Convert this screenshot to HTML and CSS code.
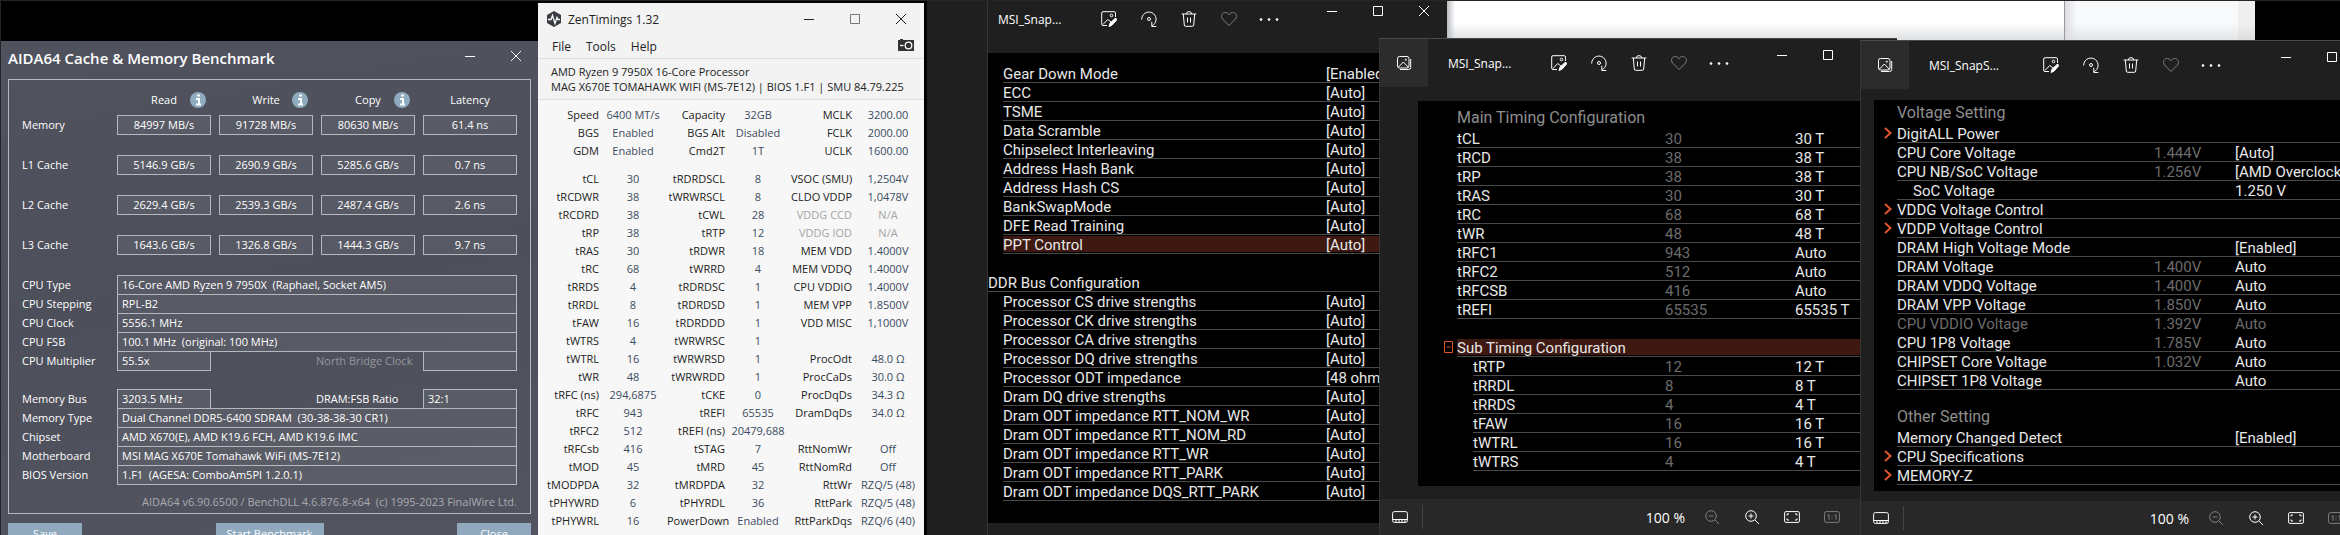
FILE: index.html
```
<!DOCTYPE html>
<html lang="en">
<head>
  <meta charset="UTF-8">
  <meta name="viewport" content="width=device-width, initial-scale=1.0">
  <title>Memory Timings</title>
  <link rel="stylesheet" href="styles.css">
</head>
<body>
  <!-- Shared icons -->
  <svg class="icon-defs" aria-hidden="true">
    <symbol id="i-min" viewBox="0 0 16 16"><path d="M3 8.500h10"/></symbol>
    <symbol id="i-max" viewBox="0 0 16 16"><path d="M3.500 3.500h9v9h-9z"/></symbol>
    <symbol id="i-close" viewBox="0 0 16 16"><path d="M3 3l10 10M13 3L3 13"/></symbol>
    <symbol id="i-gallery" viewBox="0 0 16 16"><rect x="1.500" y="1.500" width="11.500" height="11.500" rx="2"/><path d="M2.500 12l4.800-5 4.800 5M14.700 4v8.500q0 2-2.200 2H4"/><circle cx="9.800" cy="4.700" r=".6"/></symbol>
    <symbol id="i-edit" viewBox="0 0 16 16"><path d="M14.500 6V2q0-1.300-1.300-1.300H2Q.7.700.7 2v11.300q0 1.200 1.300 1.200h4M2 13.500l4.700-5L10 11"/><circle cx="10.500" cy="4.500" r="1.300"/><path class="solid" d="M8 15.500l1-3.300L14 7.500q1.500-.5 1.800 1.200L11 14.200z"/></symbol>
    <symbol id="i-rotate" viewBox="0 0 16 16"><path d="M.7 8.500A7.200 7.200 0 1 1 12.500 13.800L11 15.200M10.800 10.800v4.700h4.500"/><circle cx="8" cy="8" r="1.500"/></symbol>
    <symbol id="i-trash" viewBox="0 0 16 16"><path d="M.7 3h14.600M5.300 3Q5.500.6 8 .6T10.700 3M2.300 3l1 11q.1 1.300 1.400 1.300h6.600q1.300 0 1.400-1.300l1-11M6.500 6.500v5M9.500 6.500v5"/></symbol>
    <symbol id="i-heart" viewBox="0 0 16 16"><path d="M8 14.500L1.700 8.200C-1 5 1.500 1.200 4.500 1.500Q6.600 1.700 8 3.700 9.400 1.700 11.500 1.500c3-.3 5.500 3.500 2.800 6.700z"/></symbol>
    <symbol id="i-more" viewBox="0 0 20 16"><g class="solid"><circle cx="2" cy="8.500" r=".9"/><circle cx="10" cy="8.500" r=".9"/><circle cx="18" cy="8.500" r=".9"/></g></symbol>
    <symbol id="i-film" viewBox="0 0 16 16"><rect x=".6" y="2.600" width="14.800" height="10.800" rx="1.800"/><path d="M.6 10.500h14.800M4 10.500v3M7 10.500v3M10 10.500v3M13 10.500v3"/></symbol>
    <symbol id="i-zoomout" viewBox="0 0 16 16"><circle cx="7" cy="7" r="5.300"/><path d="M4.500 7h5M11 11l4 4"/></symbol>
    <symbol id="i-zoomin" viewBox="0 0 16 16"><circle cx="7" cy="7" r="5.300"/><path d="M4.500 7h5M7 4.500v5M11 11l4 4"/></symbol>
    <symbol id="i-fit" viewBox="0 0 16 16"><rect x=".6" y="2.600" width="14.800" height="10.800" rx="1.200"/><path d="M3 6.500V5h2M11 5h2v1.500M13 9.500V11h-2M5 11H3V9.500"/></symbol>
    <symbol id="i-actual" viewBox="0 0 16 16"><rect x=".6" y="2.600" width="14.800" height="10.800" rx="1.800"/><path d="M3.500 6.500L5 5.700v5M10.500 6.500l1.500-.8v5M8 6.700v1M8 9.300v1"/></symbol>
    <symbol id="i-info" viewBox="0 0 16 16"><circle cx="8" cy="8" r="8" fill="#8fabbf" stroke="none"/><path d="M7 3.500h3M6 7h3v5M6 12.500h5" stroke="#fff" stroke-width="2"/></symbol>
    <symbol id="i-chevron" viewBox="0 0 8 12"><path d="M1 1l5.500 5L1 11"/></symbol>
    <symbol id="i-minus" viewBox="0 0 9 12"><path d="M.5.500h8v11h-8zM2.500 6h4"/></symbol>
  </svg>

  <main class="desktop">
    <div class="browser">
      <div class="browser-page"></div>
      <div class="browser-side"></div>
      <div class="browser-scroll"></div>
    </div>
    <div class="backdrop"></div>

    <!-- AIDA64 -->
    <section class="window aida">
      <header class="aida-bar">
        <h1>AIDA64 Cache &amp; Memory Benchmark</h1>
        <button class="win-btn" aria-label="Minimize"><svg><use href="#i-min"/></svg></button>
        <button class="win-btn" aria-label="Close"><svg><use href="#i-close"/></svg></button>
      </header>
      <div class="aida-panel">
        <div class="bench">
          <span></span>
          <span class="bench-head"><b>Read</b><svg><use href="#i-info"/></svg></span>
          <span class="bench-head"><b>Write</b><svg><use href="#i-info"/></svg></span>
          <span class="bench-head"><b>Copy</b><svg><use href="#i-info"/></svg></span>
          <span class="bench-head"><b>Latency</b></span>
        </div>
        <div class="bench">
          <label for="memRead">Memory</label>
          <input type="text" id="memRead" value="84997 MB/s" readonly>
          <input type="text" aria-label="Memory write" value="91728 MB/s" readonly>
          <input type="text" aria-label="Memory copy" value="80630 MB/s" readonly>
          <input type="text" aria-label="Memory latency" value="61.4 ns" readonly>
        </div>
        <div class="bench">
          <label for="l1Read">L1 Cache</label>
          <input type="text" id="l1Read" value="5146.9 GB/s" readonly>
          <input type="text" aria-label="L1 write" value="2690.9 GB/s" readonly>
          <input type="text" aria-label="L1 copy" value="5285.6 GB/s" readonly>
          <input type="text" aria-label="L1 latency" value="0.7 ns" readonly>
        </div>
        <div class="bench">
          <label for="l2Read">L2 Cache</label>
          <input type="text" id="l2Read" value="2629.4 GB/s" readonly>
          <input type="text" aria-label="L2 write" value="2539.3 GB/s" readonly>
          <input type="text" aria-label="L2 copy" value="2487.4 GB/s" readonly>
          <input type="text" aria-label="L2 latency" value="2.6 ns" readonly>
        </div>
        <div class="bench">
          <label for="l3Read">L3 Cache</label>
          <input type="text" id="l3Read" value="1643.6 GB/s" readonly>
          <input type="text" aria-label="L3 write" value="1326.8 GB/s" readonly>
          <input type="text" aria-label="L3 copy" value="1444.3 GB/s" readonly>
          <input type="text" aria-label="L3 latency" value="9.7 ns" readonly>
        </div>

        <div class="specs">
          <div class="spec"><label for="cpuType">CPU Type</label><input class="wide" type="text" id="cpuType" value="16-Core AMD Ryzen 9 7950X  (Raphael, Socket AM5)" readonly></div>
          <div class="spec"><label for="cpuStep">CPU Stepping</label><input class="wide" type="text" id="cpuStep" value="RPL-B2" readonly></div>
          <div class="spec"><label for="cpuClock">CPU Clock</label><input class="wide" type="text" id="cpuClock" value="5556.1 MHz" readonly></div>
          <div class="spec"><label for="cpuFsb">CPU FSB</label><input class="wide" type="text" id="cpuFsb" value="100.1 MHz  (original: 100 MHz)" readonly></div>
          <div class="spec"><label for="cpuMult">CPU Multiplier</label><input type="text" id="cpuMult" value="55.5x" readonly><span></span><label class="off" for="nbClock">North Bridge Clock</label><input type="text" id="nbClock" value="" readonly></div>
        </div>
        <div class="specs">
          <div class="spec"><label for="memBus">Memory Bus</label><input type="text" id="memBus" value="3203.5 MHz" readonly><span></span><label for="ratio">DRAM:FSB Ratio</label><input type="text" id="ratio" value="32:1" readonly></div>
          <div class="spec"><label for="memType">Memory Type</label><input class="wide" type="text" id="memType" value="Dual Channel DDR5-6400 SDRAM  (30-38-38-30 CR1)" readonly></div>
          <div class="spec"><label for="chipset">Chipset</label><input class="wide" type="text" id="chipset" value="AMD X670(E), AMD K19.6 FCH, AMD K19.6 IMC" readonly></div>
          <div class="spec"><label for="board">Motherboard</label><input class="wide" type="text" id="board" value="MSI MAG X670E Tomahawk WiFi (MS-7E12)" readonly></div>
          <div class="spec"><label for="bios">BIOS Version</label><input class="wide" type="text" id="bios" value="1.F1  (AGESA: ComboAm5PI 1.2.0.1)" readonly></div>
        </div>
        <p class="aida-copy">AIDA64 v6.90.6500 / BenchDLL 4.6.876.8-x64&nbsp; (c) 1995-2023 FinalWire Ltd.</p>
      </div>
      <div class="aida-actions">
        <button>Save</button>
        <button class="start">Start Benchmark</button>
        <button>Close</button>
      </div>
    </section>

    <!-- ZenTimings -->
    <section class="window zen">
      <header class="zen-bar">
        <svg class="zen-logo" viewBox="0 0 16 16"><path d="M8 0l7 4v8l-7 4-7-4V4z" fill="#3a3d42"/><path d="M2 8.500h3l1.500-4 2.500 8 2-6 1 2h2" fill="none" stroke="#fff" stroke-width="1.300"/></svg>
        <h1>ZenTimings 1.32</h1>
        <button class="win-btn" aria-label="Minimize"><svg><use href="#i-min"/></svg></button>
        <button class="win-btn dim" aria-label="Maximize"><svg><use href="#i-max"/></svg></button>
        <button class="win-btn" aria-label="Close"><svg><use href="#i-close"/></svg></button>
      </header>
      <nav class="zen-menu">
        <button>File</button>
        <button>Tools</button>
        <button>Help</button>
        <button class="camera" aria-label="Screenshot"><svg viewBox="0 0 16 12"><path d="M0 1h2V0h3v1h11v11H0z" fill="#333"/><circle cx="10.500" cy="6.500" r="3.300" fill="none" stroke="#fff" stroke-width="1.300"/><path d="M2 6.500h3.500" stroke="#fff" stroke-width="1.300"/></svg></button>
      </nav>
      <div class="zen-cpu">
        <p>AMD Ryzen 9 7950X 16-Core Processor</p>
        <p>MAG X670E TOMAHAWK WIFI (MS-7E12) | BIOS 1.F1 | SMU 84.79.225</p>
      </div>
      <table class="timings">
        <colgroup><col class="l1"><col class="v1"><col class="l2"><col class="v2"><col class="l3"><col class="v3"></colgroup>
        <tbody>
          <tr><th>Speed</th><td>6400 MT/s</td><th>Capacity</th><td>32GB</td><th>MCLK</th><td>3200.00</td></tr>
          <tr><th>BGS</th><td>Enabled</td><th>BGS Alt</th><td>Disabled</td><th>FCLK</th><td>2000.00</td></tr>
          <tr><th>GDM</th><td>Enabled</td><th>Cmd2T</th><td>1T</td><th>UCLK</th><td>1600.00</td></tr>
        </tbody>
        <tbody>
          <tr class="first"><th>tCL</th><td>30</td><th>tRDRDSCL</th><td>8</td><th>VSOC (SMU)</th><td>1,2504V</td></tr>
          <tr><th>tRCDWR</th><td>38</td><th>tWRWRSCL</th><td>8</td><th>CLDO VDDP</th><td>1,0478V</td></tr>
          <tr><th>tRCDRD</th><td>38</td><th>tCWL</th><td>28</td><th class="na">VDDG CCD</th><td class="na">N/A</td></tr>
          <tr><th>tRP</th><td>38</td><th>tRTP</th><td>12</td><th class="na">VDDG IOD</th><td class="na">N/A</td></tr>
          <tr><th>tRAS</th><td>30</td><th>tRDWR</th><td>18</td><th>MEM VDD</th><td>1.4000V</td></tr>
          <tr><th>tRC</th><td>68</td><th>tWRRD</th><td>4</td><th>MEM VDDQ</th><td>1.4000V</td></tr>
          <tr><th>tRRDS</th><td>4</td><th>tRDRDSC</th><td>1</td><th>CPU VDDIO</th><td>1.4000V</td></tr>
          <tr><th>tRRDL</th><td>8</td><th>tRDRDSD</th><td>1</td><th>MEM VPP</th><td>1.8500V</td></tr>
          <tr><th>tFAW</th><td>16</td><th>tRDRDDD</th><td>1</td><th>VDD MISC</th><td>1,1000V</td></tr>
          <tr><th>tWTRS</th><td>4</td><th>tWRWRSC</th><td>1</td><th></th><td></td></tr>
          <tr><th>tWTRL</th><td>16</td><th>tWRWRSD</th><td>1</td><th>ProcOdt</th><td>48.0 Ω</td></tr>
          <tr><th>tWR</th><td>48</td><th>tWRWRDD</th><td>1</td><th>ProcCaDs</th><td>30.0 Ω</td></tr>
          <tr><th>tRFC (ns)</th><td>294,6875</td><th>tCKE</th><td>0</td><th>ProcDqDs</th><td>34.3 Ω</td></tr>
          <tr><th>tRFC</th><td>943</td><th>tREFI</th><td>65535</td><th>DramDqDs</th><td>34.0 Ω</td></tr>
          <tr><th>tRFC2</th><td>512</td><th>tREFI (ns)</th><td>20479,688</td><th></th><td></td></tr>
          <tr><th>tRFCsb</th><td>416</td><th>tSTAG</th><td>7</td><th>RttNomWr</th><td>Off</td></tr>
          <tr><th>tMOD</th><td>45</td><th>tMRD</th><td>45</td><th>RttNomRd</th><td>Off</td></tr>
          <tr><th>tMODPDA</th><td>32</td><th>tMRDPDA</th><td>32</td><th>RttWr</th><td>RZQ/5 (48)</td></tr>
          <tr><th>tPHYWRD</th><td>6</td><th>tPHYRDL</th><td>36</td><th>RttPark</th><td>RZQ/5 (48)</td></tr>
          <tr><th>tPHYWRL</th><td>16</td><th>PowerDown</th><td>Enabled</td><th>RttParkDqs</th><td>RZQ/6 (40)</td></tr>
        </tbody>
      </table>
    </section>

    <!-- Photos: bus configuration -->
    <section class="window photos photos-bus">
      <header class="photos-bar">
        <h2>MSI_Snap...</h2>
        <button class="tool" aria-label="Edit"><svg><use href="#i-edit"/></svg></button>
        <button class="tool" aria-label="Rotate"><svg><use href="#i-rotate"/></svg></button>
        <button class="tool" aria-label="Delete"><svg><use href="#i-trash"/></svg></button>
        <button class="tool dim" aria-label="Favorite"><svg><use href="#i-heart"/></svg></button>
        <button class="tool more" aria-label="More"><svg><use href="#i-more"/></svg></button>
        <div class="win-btns">
          <button class="win-btn" aria-label="Minimize"><svg><use href="#i-min"/></svg></button>
          <button class="win-btn" aria-label="Maximize"><svg><use href="#i-max"/></svg></button>
          <button class="win-btn" aria-label="Close"><svg><use href="#i-close"/></svg></button>
        </div>
      </header>
      <div class="viewer">
        <div class="row"><span>Gear Down Mode</span><span>[Enabled]</span></div>
        <div class="row"><span>ECC</span><span>[Auto]</span></div>
        <div class="row"><span>TSME</span><span>[Auto]</span></div>
        <div class="row"><span>Data Scramble</span><span>[Auto]</span></div>
        <div class="row"><span>Chipselect Interleaving</span><span>[Auto]</span></div>
        <div class="row"><span>Address Hash Bank</span><span>[Auto]</span></div>
        <div class="row"><span>Address Hash CS</span><span>[Auto]</span></div>
        <div class="row"><span>BankSwapMode</span><span>[Auto]</span></div>
        <div class="row"><span>DFE Read Training</span><span>[Auto]</span></div>
        <div class="row active"><span>PPT Control</span><span>[Auto]</span></div>
        <div class="row group"><span>DDR Bus Configuration</span></div>
        <div class="row"><span>Processor CS drive strengths</span><span>[Auto]</span></div>
        <div class="row"><span>Processor CK drive strengths</span><span>[Auto]</span></div>
        <div class="row"><span>Processor CA drive strengths</span><span>[Auto]</span></div>
        <div class="row"><span>Processor DQ drive strengths</span><span>[Auto]</span></div>
        <div class="row"><span>Processor ODT impedance</span><span>[48 ohm]</span></div>
        <div class="row"><span>Dram DQ drive strengths</span><span>[Auto]</span></div>
        <div class="row"><span>Dram ODT impedance RTT_NOM_WR</span><span>[Auto]</span></div>
        <div class="row"><span>Dram ODT impedance RTT_NOM_RD</span><span>[Auto]</span></div>
        <div class="row"><span>Dram ODT impedance RTT_WR</span><span>[Auto]</span></div>
        <div class="row"><span>Dram ODT impedance RTT_PARK</span><span>[Auto]</span></div>
        <div class="row"><span>Dram ODT impedance DQS_RTT_PARK</span><span>[Auto]</span></div>
      </div>
    </section>

    <!-- Photos: timing configuration -->
    <section class="window photos photos-timing">
      <header class="photos-bar">
        <button class="gallery" aria-label="All photos"><svg><use href="#i-gallery"/></svg></button>
        <h2>MSI_Snap...</h2>
        <button class="tool" aria-label="Edit"><svg><use href="#i-edit"/></svg></button>
        <button class="tool" aria-label="Rotate"><svg><use href="#i-rotate"/></svg></button>
        <button class="tool" aria-label="Delete"><svg><use href="#i-trash"/></svg></button>
        <button class="tool dim" aria-label="Favorite"><svg><use href="#i-heart"/></svg></button>
        <button class="tool more" aria-label="More"><svg><use href="#i-more"/></svg></button>
        <div class="win-btns">
          <button class="win-btn" aria-label="Minimize"><svg><use href="#i-min"/></svg></button>
          <button class="win-btn" aria-label="Maximize"><svg><use href="#i-max"/></svg></button>
          <button class="win-btn" aria-label="Close"><svg><use href="#i-close"/></svg></button>
        </div>
      </header>
      <div class="viewer">
        <h3>Main Timing Configuration</h3>
        <div class="row"><span>tCL</span><span class="cur">30</span><span>30 T</span></div>
        <div class="row"><span>tRCD</span><span class="cur">38</span><span>38 T</span></div>
        <div class="row"><span>tRP</span><span class="cur">38</span><span>38 T</span></div>
        <div class="row"><span>tRAS</span><span class="cur">30</span><span>30 T</span></div>
        <div class="row"><span>tRC</span><span class="cur">68</span><span>68 T</span></div>
        <div class="row"><span>tWR</span><span class="cur">48</span><span>48 T</span></div>
        <div class="row"><span>tRFC1</span><span class="cur">943</span><span>Auto</span></div>
        <div class="row"><span>tRFC2</span><span class="cur">512</span><span>Auto</span></div>
        <div class="row"><span>tRFCSB</span><span class="cur">416</span><span>Auto</span></div>
        <div class="row"><span>tREFI</span><span class="cur">65535</span><span>65535 T</span></div>
        <div class="row active group"><span><svg class="mark minus"><use href="#i-minus"/></svg>Sub Timing Configuration</span></div>
        <div class="row sub"><span>tRTP</span><span class="cur">12</span><span>12 T</span></div>
        <div class="row sub"><span>tRRDL</span><span class="cur">8</span><span>8 T</span></div>
        <div class="row sub"><span>tRRDS</span><span class="cur">4</span><span>4 T</span></div>
        <div class="row sub"><span>tFAW</span><span class="cur">16</span><span>16 T</span></div>
        <div class="row sub"><span>tWTRL</span><span class="cur">16</span><span>16 T</span></div>
        <div class="row sub"><span>tWTRS</span><span class="cur">4</span><span>4 T</span></div>
      </div>
      <footer class="photos-foot">
        <button class="tool" aria-label="Filmstrip"><svg><use href="#i-film"/></svg></button>
        <span class="zoom">100 %</span>
        <button class="tool dim" aria-label="Zoom out"><svg><use href="#i-zoomout"/></svg></button>
        <button class="tool" aria-label="Zoom in"><svg><use href="#i-zoomin"/></svg></button>
        <button class="tool" aria-label="Fit to window"><svg><use href="#i-fit"/></svg></button>
        <button class="tool dim" aria-label="Actual size"><svg><use href="#i-actual"/></svg></button>
      </footer>
    </section>

    <!-- Photos: voltage settings -->
    <section class="window photos photos-voltage">
      <header class="photos-bar">
        <button class="gallery" aria-label="All photos"><svg><use href="#i-gallery"/></svg></button>
        <h2>MSI_SnapS...</h2>
        <button class="tool" aria-label="Edit"><svg><use href="#i-edit"/></svg></button>
        <button class="tool" aria-label="Rotate"><svg><use href="#i-rotate"/></svg></button>
        <button class="tool" aria-label="Delete"><svg><use href="#i-trash"/></svg></button>
        <button class="tool dim" aria-label="Favorite"><svg><use href="#i-heart"/></svg></button>
        <button class="tool more" aria-label="More"><svg><use href="#i-more"/></svg></button>
        <div class="win-btns">
          <button class="win-btn" aria-label="Minimize"><svg><use href="#i-min"/></svg></button>
          <button class="win-btn" aria-label="Maximize"><svg><use href="#i-max"/></svg></button>
          <button class="win-btn" aria-label="Close"><svg><use href="#i-close"/></svg></button>
        </div>
      </header>
      <div class="viewer">
        <h3>Voltage Setting</h3>
        <div class="row"><span><svg class="mark"><use href="#i-chevron"/></svg>DigitALL Power</span></div>
        <div class="row"><span>CPU Core Voltage</span><span class="cur">1.444V</span><span>[Auto]</span></div>
        <div class="row"><span>CPU NB/SoC Voltage</span><span class="cur">1.256V</span><span>[AMD Overclocking]</span></div>
        <div class="row"><span class="indent">SoC Voltage</span><span></span><span>1.250 V</span></div>
        <div class="row"><span><svg class="mark"><use href="#i-chevron"/></svg>VDDG Voltage Control</span></div>
        <div class="row"><span><svg class="mark"><use href="#i-chevron"/></svg>VDDP Voltage Control</span></div>
        <div class="row"><span>DRAM High Voltage Mode</span><span></span><span>[Enabled]</span></div>
        <div class="row"><span>DRAM Voltage</span><span class="cur">1.400V</span><span>Auto</span></div>
        <div class="row"><span>DRAM VDDQ Voltage</span><span class="cur">1.400V</span><span>Auto</span></div>
        <div class="row"><span>DRAM VPP Voltage</span><span class="cur">1.850V</span><span>Auto</span></div>
        <div class="row disabled"><span>CPU VDDIO Voltage</span><span class="cur">1.392V</span><span>Auto</span></div>
        <div class="row"><span>CPU 1P8 Voltage</span><span class="cur">1.785V</span><span>Auto</span></div>
        <div class="row"><span>CHIPSET Core Voltage</span><span class="cur">1.032V</span><span>Auto</span></div>
        <div class="row"><span>CHIPSET 1P8 Voltage</span><span></span><span>Auto</span></div>
        <h3 class="next">Other Setting</h3>
        <div class="row"><span>Memory Changed Detect</span><span></span><span>[Enabled]</span></div>
        <div class="row"><span><svg class="mark"><use href="#i-chevron"/></svg>CPU Specifications</span></div>
        <div class="row"><span><svg class="mark"><use href="#i-chevron"/></svg>MEMORY-Z</span></div>
      </div>
      <footer class="photos-foot">
        <button class="tool" aria-label="Filmstrip"><svg><use href="#i-film"/></svg></button>
        <span class="zoom">100 %</span>
        <button class="tool dim" aria-label="Zoom out"><svg><use href="#i-zoomout"/></svg></button>
        <button class="tool" aria-label="Zoom in"><svg><use href="#i-zoomin"/></svg></button>
        <button class="tool" aria-label="Fit to window"><svg><use href="#i-fit"/></svg></button>
        <button class="tool dim" aria-label="Actual size"><svg><use href="#i-actual"/></svg></button>
      </footer>
    </section>
  </main>
</body>
</html>
```
FILE: styles.css
```
/* General Styling */
* {
  box-sizing: border-box;
}

body {
  margin: 0;
  font-family: "Open Sans", "Noto Sans", sans-serif;
  font-size: 11px;
  color: #fff;
  background-color: #000;
}

h1, h2, h3, p {
  margin: 0;
  font-weight: normal;
}

button {
  padding: 0;
  border: none;
  background: none;
  color: inherit;
  font: inherit;
}

svg {
  width: 16px;
  height: 16px;
  fill: none;
  stroke: currentColor;
  flex: none;
}

.solid {
  fill: currentColor;
}

.icon-defs {
  display: none;
}

/* Desktop */
.desktop {
  position: relative;
  height: 100vh;
  overflow: hidden;
  border-top: 1px solid #252525;
  border-left: 1px solid #252525;
}

.window {
  position: absolute;
  bottom: 0;
  display: flex;
  flex-direction: column;
  overflow: hidden;
}

/* Browser behind the windows */
.browser {
  position: absolute;
  top: -1px;
  left: 1446px;
  width: 808px;
  height: 42px;
  display: flex;
}

.browser-page {
  flex: 1;
  background: linear-gradient(to right, #b8bcc0, transparent 8px), linear-gradient(#fff 24px, #d8dadc);
}

.browser-side {
  width: 174px;
  border-left: 1px solid #999;
  background: linear-gradient(to right, #dcdde0, transparent 12px), linear-gradient(#f8f9fb 24px, #dfe1e3);
}

.browser-scroll {
  width: 17px;
  background: linear-gradient(#efefef 24px, #dadada);
}

.backdrop {
  position: absolute;
  top: 0;
  bottom: 0;
  left: 926px;
  width: 60px;
  background-color: #1f1f1f;
}

.win-btn {
  display: flex;
  align-items: center;
  justify-content: center;
  width: 46px;
}

/* AIDA64 */
.aida {
  top: 40px;
  left: 0;
  width: 537px;
  padding: 0 7px;
  background: linear-gradient(170deg, #50535e, #4d4f5b 50%, #52545f);
}

.aida-bar,
.aida-panel,
.aida-actions {
  flex: none;
}

.aida-bar {
  display: flex;
  height: 38px;
}

.aida-bar h1 {
  flex: 1;
  font-size: 15px;
  font-weight: 600;
  line-height: 34px;
}

.aida-bar .win-btn {
  height: 29px;
}

.aida-bar .win-btn:last-child {
  margin-right: -8px;
}

.aida-panel {
  padding: 10px 13px 2px;
  border: 1px solid #b5b8bf;
}

.bench {
  display: grid;
  grid-template-columns: 87px repeat(4, 1fr);
  column-gap: 8px;
  height: 20px;
  line-height: 20px;
  margin-bottom: 20px;
}

.bench:first-child {
  margin-bottom: 5px;
}

.bench-head {
  display: grid;
  grid-template-columns: 1fr auto 1fr;
  align-items: center;
}

.bench-head b {
  grid-column: 2;
  font-weight: normal;
}

.bench-head svg {
  justify-self: end;
  margin-right: 5px;
}

.aida input {
  min-width: 0;
  height: 20px;
  padding: 0 4px;
  border: 1px solid #b5b8bf;
  border-radius: 0;
  background-color: rgba(255, 255, 255, 0.06);
  color: #fff;
  font: inherit;
}

.bench input {
  text-align: center;
}

.specs {
  margin-bottom: 19px;
}

.spec {
  display: grid;
  grid-template-columns: 95px 94px 1fr 107px 94px;
  height: 19px;
  line-height: 20px;
  white-space: nowrap;
}

.spec .wide {
  grid-column: 2 / -1;
}

.off {
  color: #95979d;
}

.aida-copy {
  margin-top: -10px;
  line-height: 18px;
  text-align: right;
  color: #a9abb0;
}

.aida-actions {
  display: flex;
  justify-content: space-between;
  margin-top: 9px;
}

.aida-actions button {
  flex: none;
  width: 74px;
  height: 20px;
  background-color: #90a9bc;
}

.aida-actions .start {
  width: 108px;
}

/* ZenTimings */
.zen {
  top: 2px;
  left: 537px;
  width: 386px;
  background-color: #f7f7f7;
  color: #222;
}

.zen-bar {
  display: flex;
  flex: none;
  align-items: center;
  height: 32px;
  padding-left: 8px;
  background-color: #f3f3f3;
}

.zen-bar h1 {
  flex: 1;
  margin-left: 6px;
  font-size: 12px;
}

.zen-logo {
  stroke: none;
}

.zen-bar .dim {
  color: #777;
}

.zen-menu {
  display: flex;
  flex: none;
  align-items: center;
  gap: 15px;
  height: 24px;
  padding: 0 10px 0 14px;
  font-size: 12px;
  background-color: #f3f3f3;
  border-bottom: 1px solid #dcdfe0;
}

.camera {
  margin-left: auto;
  height: 18px;
}

.camera svg {
  height: 12px;
  stroke: none;
}

.zen-cpu {
  flex: none;
  padding: 5px 0 5px 13px;
  height: 41px;
  line-height: 15px;
  white-space: nowrap;
  background-color: #f3f3f3;
  border-bottom: 1px solid #dcdfe0;
}

.timings {
  width: 100%;
  margin-top: 6px;
  table-layout: fixed;
  border-collapse: collapse;
  line-height: 18px;
  white-space: nowrap;
}

.timings th,
.timings td {
  height: 18px;
  padding: 0;
  font-weight: normal;
}

.timings th {
  text-align: right;
}

.timings td {
  text-align: center;
  color: #3b4c61;
}

.timings .first > * {
  padding-top: 10px;
}

.timings .na {
  color: #a5a5a5;
}

.l1 { width: 61px; }
.v1 { width: 68px; }
.l2 { width: 58px; }
.v2 { width: 66px; }
.l3 { width: 61px; }

/* Photos windows */
.photos {
  background-color: #1f1f1f;
  border-top: 1px solid #4a4a4a;
  border-left: 1px solid #353535;
}

.photos-bar {
  display: flex;
  flex: none;
}

.photos-bar h2 {
  width: 91px;
  font-size: 12px;
  line-height: 50px;
}

.tool,
.gallery {
  display: flex;
  align-items: center;
  justify-content: center;
  flex: none;
  width: 40px;
  height: 48px;
}

.gallery {
  width: 48px;
  margin-right: 20px;
  background-color: #2c2c2c;
}

.tool.dim {
  color: #808080;
}

.more svg {
  width: 20px;
}

.win-btns {
  display: flex;
  height: 32px;
  margin-left: auto;
}

.viewer {
  flex: 1;
  overflow: hidden;
  background-color: #000;
  font-family: Roboto, "Liberation Sans", sans-serif;
  font-size: 15px;
}

.viewer h3 {
  font-size: 16px;
  line-height: 22px;
  color: #8e8e8e;
}

.viewer h3.next {
  margin-top: 16px;
}

.row {
  display: grid;
  height: 19px;
  line-height: 20px;
  white-space: nowrap;
  border-bottom: 1px solid #4a4a4a;
  color: #e8e8e8;
}

.row.active {
  background: linear-gradient(#000 1px, #3d1911 1px, #3d1911 17px, #000 17px);
}

.row.group {
  margin-top: 19px;
}

.row.disabled {
  border-color: transparent;
  color: #6c6c6c;
}

.row .cur {
  color: #6c6c6c;
}

.indent {
  padding-left: 16px;
}

.mark {
  width: 8px;
  height: 12px;
  margin-left: -13px;
  margin-right: 5px;
  color: #e0552c;
  stroke-width: 2;
}

.mark.minus {
  width: 9px;
  margin-right: 4px;
  stroke-width: 1;
}

.photos-foot {
  display: flex;
  align-items: center;
  flex: none;
  height: 36px;
  padding-right: 45px;
  background-color: #282828;
}

.photos-foot .tool {
  height: 36px;
}

.photos-foot .tool:first-child {
  height: 24px;
  width: 43px;
  padding-right: 2px;
  border-right: 1px solid #444;
}

.zoom {
  margin-left: auto;
  margin-right: 7px;
  font-size: 14px;
}

/* Bus configuration */
.photos-bus {
  top: -7px;
  left: 986px;
  width: 460px;
  padding-bottom: 12px;
}

.photos-bus .photos-bar {
  height: 58px;
  padding-left: 10px;
}

.photos-bus .viewer {
  padding-top: 11px;
}

.photos-bus .row {
  grid-template-columns: 1fr 121px;
  margin-left: 15px;
}

.photos-bus .row.group {
  margin-left: 0;
}

/* Timing configuration */
.photos-timing {
  top: 37px;
  left: 1378px;
  width: 518px;
}

.photos-timing .photos-bar {
  height: 62px;
}

.photos-timing .viewer {
  margin: 0 0 13px 38px;
  padding: 6px 0 0 39px;
}

.photos-timing .row {
  grid-template-columns: 1fr 130px 102px;
}

.photos-timing .row.sub {
  margin-left: 16px;
}

/* Voltage settings */
.photos-voltage {
  top: 39px;
  left: 1859px;
  width: 541px;
}

.photos-voltage .photos-bar {
  height: 59px;
}

.photos-voltage .photos-bar h2 {
  width: 102px;
}

.photos-voltage .viewer {
  margin: 0 0 10px 13px;
  padding: 2px 0 0 23px;
}

.photos-voltage .row {
  grid-template-columns: 1fr 81px 166px;
}

.photos-voltage .photos-foot {
  height: 34px;
}
```
